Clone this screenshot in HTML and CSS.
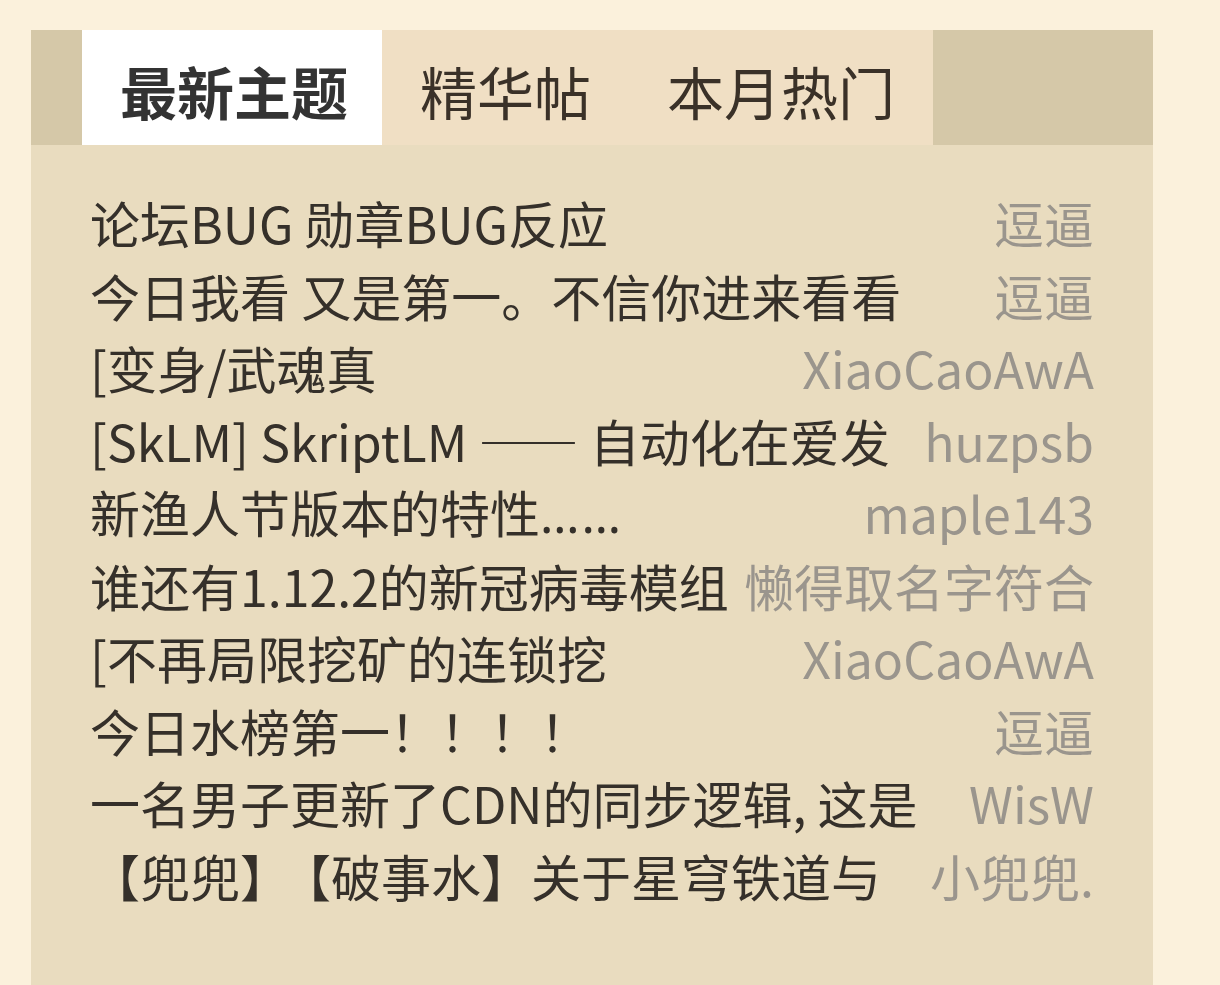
FILE: index.html
```html
<!DOCTYPE html>
<html lang="zh-CN">
<head>
<meta charset="utf-8">
<title>论坛</title>
<link rel="stylesheet" href="styles.css">
</head>
<body>
<div class="panel">
  <div class="tabbar">
    <div class="tabs">
      <div class="tab active">最新主题</div>
      <div class="tab">精华帖</div>
      <div class="tab">本月热门</div>
    </div>
  </div>
  <ul class="list">
    <li class="row"><span class="title">论坛BUG 勋章BUG反应</span><span class="author">逗逼</span></li>
    <li class="row"><span class="title">今日我看 又是第一。不信你进来看看</span><span class="author">逗逼</span></li>
    <li class="row"><span class="title">[变身/武魂真</span><span class="author">XiaoCaoAwA</span></li>
    <li class="row"><span class="title">[SkLM] SkriptLM —— 自动化在爱发</span><span class="author">huzpsb</span></li>
    <li class="row"><span class="title">新渔人节版本的特性<span class="ellipsis">……</span></span><span class="author">maple143</span></li>
    <li class="row"><span class="title">谁还有1.12.2的新冠病毒模组</span><span class="author">懒得取名字符合</span></li>
    <li class="row"><span class="title">[不再局限挖矿的连锁挖</span><span class="author">XiaoCaoAwA</span></li>
    <li class="row"><span class="title">今日水榜第一！！！！</span><span class="author">逗逼</span></li>
    <li class="row"><span class="title">一名男子更新了CDN的同步逻辑, 这是</span><span class="author">WisW</span></li>
    <li class="row"><span class="title">【兜兜】<span class="gap">【破事水】</span>关于星穹铁道与</span><span class="author">小兜兜.</span></li>
  </ul>
</div>
</body>
</html>
```

FILE: styles.css
```css
html, body {
  margin: 0;
  padding: 0;
  height: 100%;
}
body {
  background: #fbf1dc;
  font-family: "Noto Sans CJK SC", "Noto Sans", sans-serif;
  padding: 30px 67px 0 31px;
  box-sizing: border-box;
  overflow: hidden;
}
.panel {
  background: #e9dcbf;
  height: 1000px;
}
.tabbar {
  background: #d5c8a8;
  height: 115px;
  padding-left: 51px;
  display: flex;
}
.tabs {
  display: flex;
  background: #f0dfc4;
}
.tab {
  padding: 6px 38px 0 38px;
  font-size: 57px;
  line-height: 109px;
  color: #3a3128;
  white-space: nowrap;
}
.tab.active {
  background: #ffffff;
  font-weight: 700;
  color: #333333;
  padding: 6px 34px 0 38px;
}
.list {
  list-style: none;
  margin: 0;
  padding: 41px 59px 0 59px;
}
.row {
  display: flex;
  justify-content: space-between;
  align-items: center;
  height: 72.5px;
  font-size: 50px;
  line-height: 72.5px;
}
.title {
  color: #35302a;
  white-space: nowrap;
  flex-shrink: 0;
}
.ellipsis {
  font-family: "Noto Sans", sans-serif;
  letter-spacing: 2px;
}
.gap {
  margin-left: 16px;
}
.author {
  color: #9a958d;
  white-space: nowrap;
  flex-shrink: 0;
  margin-left: 12px;
}
```
